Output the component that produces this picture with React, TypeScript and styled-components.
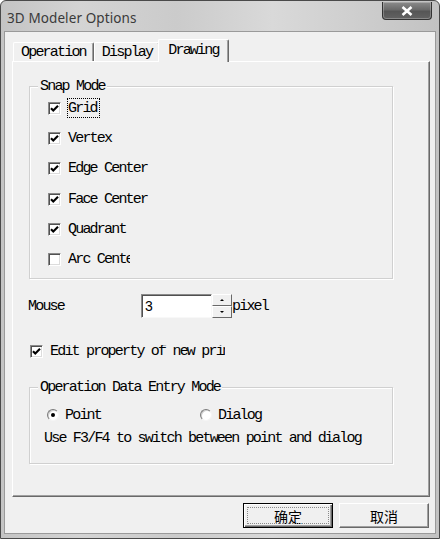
import styled, { createGlobalStyle } from "styled-components";

const GlobalStyle = createGlobalStyle`
  html,
  body {
    margin: 0;
    padding: 0;
    background: #ffffff;
  }

  body {
    width: 440px;
    height: 539px;
    overflow: hidden;
  }

  * {
    box-sizing: border-box;
  }
`;

const mono = `"Liberation Mono", "Courier New", monospace`;

const Window = styled.div`
  width: 440px;
  height: 539px;
  display: flex;
  flex-direction: column;
  padding: 0 3px 4px;
  border: 1px solid #4a4a4a;
  border-radius: 6px 6px 0 0;
  background: linear-gradient(
    90deg,
    #c4c4c4 0%,
    #d4d4d4 18%,
    #cbcbcb 40%,
    #d9d9d9 62%,
    #cfcfcf 80%,
    #c2c2c2 100%
  );
`;

const TitleBar = styled.div`
  height: 30px;
  flex-shrink: 0;
  display: flex;
  align-items: flex-start;
  justify-content: space-between;
  padding-left: 3px;
`;

const Title = styled.span`
  margin-top: 8px;
  font-family: "Noto Sans", "Open Sans", sans-serif;
  font-size: 13.5px;
  line-height: 18px;
  color: #3a3a3a;
  letter-spacing: 0.1px;
`;

const CloseButton = styled.div`
  width: 50px;
  height: 18px;
  margin: 1px 4px 0 0;
  display: flex;
  align-items: center;
  justify-content: center;
  border: 1px solid #333333;
  border-top: none;
  border-radius: 0 0 4px 4px;
  background: linear-gradient(180deg, #8c8c8c 0%, #6a6a6a 45%, #565656 55%, #626262 100%);
  box-shadow: inset 0 0 0 1px rgba(255, 255, 255, 0.25);
`;

const Client = styled.div`
  flex: 1;
  display: flex;
  flex-direction: column;
  padding: 7px 5px 0 7px;
  border: 1px solid #9a9a9a;
  background: #f0f0f0;
`;

const TabStrip = styled.div`
  height: 22px;
  display: flex;
  align-items: flex-end;
  position: relative;
  z-index: 1;
`;

const Tab = styled.div<{ $active?: boolean }>`
  height: ${(p) => (p.$active ? "23px" : "19px")};
  margin-left: ${(p) => (p.$active ? "-2px" : "0")};
  margin-bottom: ${(p) => (p.$active ? "-1px" : "0")};
  padding: ${(p) => (p.$active ? "0 9px 2px" : "0 7px")};
  &:first-child {
    margin-left: 1px;
  }
  display: flex;
  align-items: center;
  font-family: ${mono};
  font-size: 15px;
  letter-spacing: -1.8px;
  color: #000;
  background: #f0f0f0;
  border-top: 1px solid #ffffff;
  border-left: 1px solid #ffffff;
  border-right: 1px solid #696969;
  border-radius: 2px 2px 0 0;
  box-shadow: inset -1px 0 0 #a0a0a0;
`;

const Panel = styled.div`
  width: 418px;
  height: 436px;
  display: flex;
  flex-direction: column;
  border: 1px solid;
  border-color: #ffffff #696969 #696969 #ffffff;
  box-shadow: inset -1px -1px 0 #a0a0a0;
`;

const Group = styled.div<{ $height: number; $top: number }>`
  position: relative;
  width: 364px;
  height: ${(p) => p.$height}px;
  margin: ${(p) => p.$top}px 0 0 16px;
  border: 1px solid #d0d0d0;
  box-shadow: inset 1px 1px 0 #ffffff, 1px 1px 0 #ffffff;
`;

const Legend = styled.span`
  position: absolute;
  top: -8px;
  left: 8px;
  padding: 0 2px;
  background: #f0f0f0;
  font-family: ${mono};
  font-size: 15px;
  line-height: 15px;
  letter-spacing: -1.8px;
  color: #000;
`;

const CheckList = styled.div`
  display: flex;
  flex-direction: column;
  gap: 17.2px;
  padding: 15px 0 0 18px;
`;

const CheckRow = styled.div<{ $indent?: number }>`
  height: 13px;
  display: flex;
  align-items: center;
  gap: 7px;
  padding-left: ${(p) => p.$indent ?? 0}px;
`;

const Box = styled.span`
  width: 13px;
  height: 13px;
  flex-shrink: 0;
  display: flex;
  align-items: center;
  justify-content: center;
  background: #ffffff;
  border: 1px solid;
  border-color: #8a8a8a #ffffff #ffffff #8a8a8a;
  box-shadow: inset 1px 1px 0 #505050, inset -1px -1px 0 #dcdcdc;
`;

const Label = styled.span<{ $clip?: number; $focus?: boolean }>`
  position: relative;
  display: inline-block;
  font-family: ${mono};
  font-size: 15px;
  line-height: 13px;
  letter-spacing: -1.8px;
  color: #000;
  white-space: nowrap;
  ${(p) => (p.$clip ? `width: ${p.$clip}px; overflow: hidden;` : "")}
  ${(p) =>
    p.$focus
      ? `&::after {
      content: "";
      position: absolute;
      inset: -4px -3px -3px -1px;
      border: 1px dotted #000;
    }`
      : ""}
`;

const MouseRow = styled.div`
  height: 24px;
  margin-top: 15px;
  padding-left: 15px;
  display: flex;
  align-items: center;
`;

const MouseLabel = styled(Label)`
  width: 113px;
`;

const NumberInput = styled.div`
  width: 71px;
  height: 24px;
  display: flex;
  align-items: center;
  padding-left: 3px;
  background: #ffffff;
  border: 1px solid;
  border-color: #8a8a8a #f8f8f8 #f8f8f8 #8a8a8a;
  box-shadow: inset 1px 1px 0 #505050;
  font-family: "Liberation Sans", Arial, sans-serif;
  font-size: 14px;
  color: #000;
`;

const Spinner = styled.div`
  width: 20px;
  height: 24px;
  display: flex;
  flex-direction: column;
`;

const SpinButton = styled.div<{ $down?: boolean }>`
  flex: 1;
  display: flex;
  align-items: center;
  justify-content: center;
  background: #f0f0f0;
  border: 1px solid;
  border-color: #ffffff #696969 #696969 #ffffff;

  &::before {
    content: "";
    border-left: 2px solid transparent;
    border-right: 2px solid transparent;
    ${(p) => (p.$down ? "border-top: 2px solid #000;" : "border-bottom: 2px solid #000;")}
  }
`;

const EditRow = styled(CheckRow)`
  margin-top: 27px;
`;

const RadioRow = styled.div`
  display: flex;
  padding: 21px 0 0 17px;
`;

const RadioOption = styled.div<{ $width?: number }>`
  height: 12px;
  display: flex;
  align-items: center;
  gap: 6px;
  ${(p) => (p.$width ? `width: ${p.$width}px;` : "")}
`;

const RadioCircle = styled.span<{ $checked?: boolean }>`
  width: 12px;
  height: 12px;
  flex-shrink: 0;
  display: flex;
  align-items: center;
  justify-content: center;
  border-radius: 50%;
  background: #ffffff;
  border: 1px solid;
  border-color: #7a7a7a #f4f4f4 #f4f4f4 #7a7a7a;
  box-shadow: inset 1px 1px 0 #d0d0d0;

  &::after {
    content: "";
    width: 4px;
    height: 4px;
    border-radius: 50%;
    background: ${(p) => (p.$checked ? "#000" : "transparent")};
  }
`;

const HintText = styled(Label)`
  margin: 11px 0 0 14px;
`;

const Footer = styled.div`
  display: flex;
  justify-content: flex-end;
  gap: 6px;
  margin-top: 6px;
  padding-right: 1px;
`;

const Button = styled.div<{ $default?: boolean }>`
  position: relative;
  width: 90px;
  height: 25px;
  display: flex;
  align-items: center;
  justify-content: center;
  font-family: "Noto Sans CJK SC", "Noto Sans", sans-serif;
  font-size: 14px;
  color: #000;
  background: #f0f0f0;
  border: 1px solid;
  border-color: ${(p) => (p.$default ? "#000" : "#ffffff #696969 #696969 #ffffff")};
  box-shadow: ${(p) =>
    p.$default
      ? "inset 1px 1px 0 #ffffff, inset -1px -1px 0 #696969, inset -2px -2px 0 #a0a0a0"
      : "inset -1px -1px 0 #a0a0a0"};

  ${(p) =>
    p.$default
      ? `&::after {
      content: "";
      position: absolute;
      inset: 3px;
      border: 1px dotted #8a8a8a;
    }`
      : ""}
`;

const Check = () => (
  <svg width="9" height="9" viewBox="0 0 9 9">
    <path d="M1 4.2 L3.3 6.6 L8 1.8" stroke="#000" strokeWidth="2.1" fill="none" />
  </svg>
);

const CheckBox = ({ checked }: { checked?: boolean }) => <Box>{checked && <Check />}</Box>;

const snapItems = [
  { label: "Grid", checked: true, focus: true },
  { label: "Vertex", checked: true },
  { label: "Edge Center", checked: true },
  { label: "Face Center", checked: true },
  { label: "Quadrant", checked: true },
  { label: "Arc Center", checked: false, clip: 62 },
];

export default function App() {
  return (
    <>
      <GlobalStyle />
      <Window>
        <TitleBar>
          <Title>3D Modeler Options</Title>
          <CloseButton>
            <svg width="12" height="10" viewBox="0 0 12 10">
              <path d="M1.5 1 L10.5 9 M10.5 1 L1.5 9" stroke="#ffffff" strokeWidth="2.6" />
            </svg>
          </CloseButton>
        </TitleBar>

        <Client>
          <TabStrip>
            <Tab>Operation</Tab>
            <Tab>Display</Tab>
            <Tab $active>Drawing</Tab>
          </TabStrip>

          <Panel>
            <Group $top={24} $height={193}>
              <Legend>Snap Mode</Legend>
              <CheckList>
                {snapItems.map((item) => (
                  <CheckRow key={item.label}>
                    <CheckBox checked={item.checked} />
                    <Label $focus={item.focus} $clip={item.clip}>
                      {item.label}
                    </Label>
                  </CheckRow>
                ))}
              </CheckList>
            </Group>

            <MouseRow>
              <MouseLabel>Mouse</MouseLabel>
              <NumberInput>3</NumberInput>
              <Spinner>
                <SpinButton />
                <SpinButton $down />
              </Spinner>
              <Label>pixel</Label>
            </MouseRow>

            <EditRow $indent={17}>
              <CheckBox checked />
              <Label $clip={175}>Edit property of new primitives</Label>
            </EditRow>

            <Group $top={29} $height={77}>
              <Legend>Operation Data Entry Mode</Legend>
              <RadioRow>
                <RadioOption $width={153}>
                  <RadioCircle $checked />
                  <Label>Point</Label>
                </RadioOption>
                <RadioOption>
                  <RadioCircle />
                  <Label>Dialog</Label>
                </RadioOption>
              </RadioRow>
              <HintText>Use F3/F4 to switch between point and dialog</HintText>
            </Group>
          </Panel>

          <Footer>
            <Button $default>确定</Button>
            <Button>取消</Button>
          </Footer>
        </Client>
      </Window>
    </>
  );
}
